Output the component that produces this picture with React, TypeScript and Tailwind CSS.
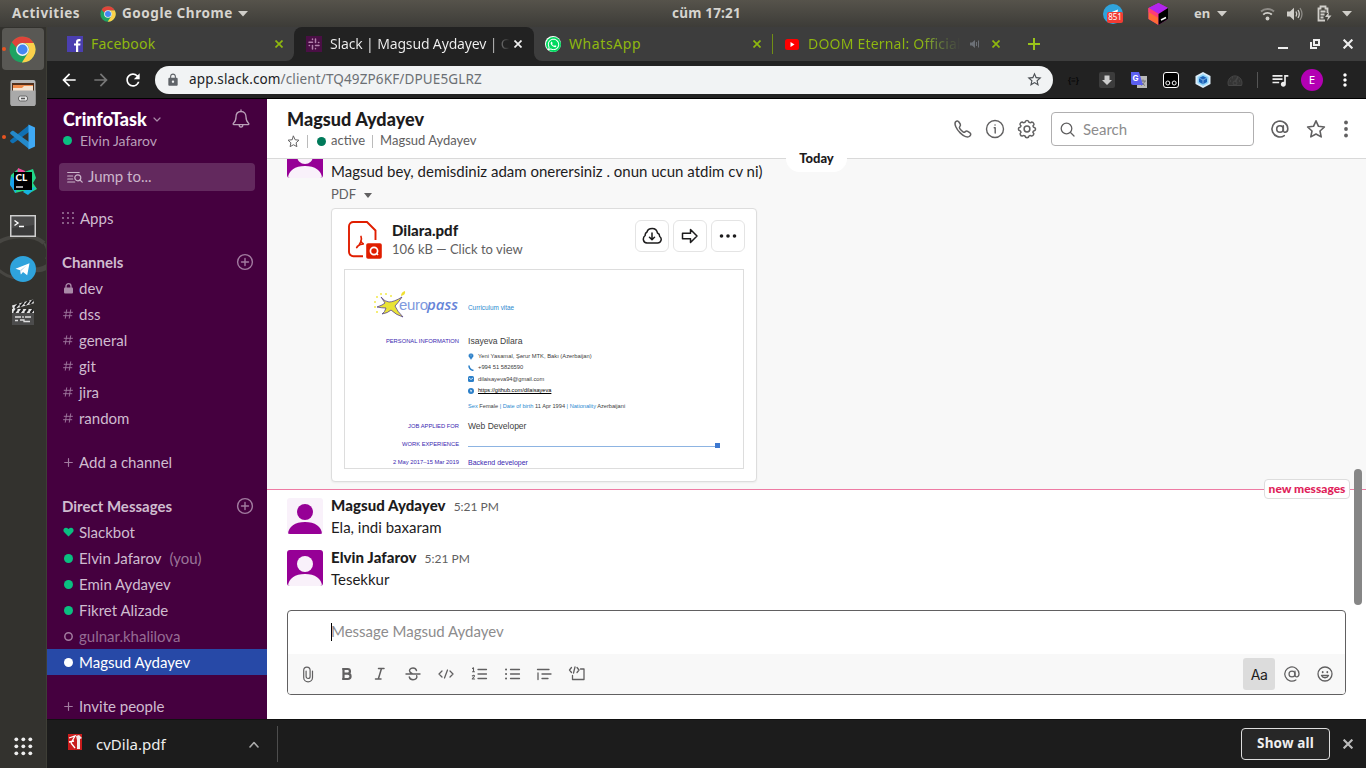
import React from "react";
import { MdArrowBack, MdArrowForward, MdRefresh, MdLock, MdStarBorder, MdQueueMusic, MdMoreVert } from "react-icons/md";
import { FaWhatsapp } from "react-icons/fa";

type SvgProps = { w: number; h?: number; box?: string; className?: string; sw?: number; children: React.ReactNode };

function Line({ w, h, box = "0 0 20 20", className = "", sw = 1.5, children }: SvgProps) {
  return (
    <svg width={w} height={h ?? w} viewBox={box} fill="none" stroke="currentColor" strokeWidth={sw} strokeLinecap="round" strokeLinejoin="round" className={`shrink-0 ${className}`}>
      {children}
    </svg>
  );
}

function ChromeLogo({ size }: { size: number }) {
  return (
    <svg width={size} height={size} viewBox="0 0 48 48" className="shrink-0">
      <circle cx="24" cy="24" r="23" fill="#1ea362" />
      <path d="M44 12.500A23 23 0 0 1 23 47l11-17.200A11.500 11.500 0 0 0 24 12.500z" fill="#fcd04b" />
      <path d="M24 1a23 23 0 0 1 20 11.500H24A11.500 11.500 0 0 0 13 20.500L5 11A23 23 0 0 1 24 1z" fill="#e0443a" />
      <circle cx="24" cy="24" r="11.500" fill="#f4f4f4" />
      <circle cx="24" cy="24" r="9" fill="#4587f3" />
    </svg>
  );
}

function TelegramLogo({ size }: { size: number }) {
  return (
    <svg width={size} height={size} viewBox="0 0 26 26" className="shrink-0">
      <circle cx="13" cy="13" r="13" fill="#2fa3dc" />
      <path d="M5.500 12.800L19.500 7.300l-2.300 11.900-4.200-3.100-2.100 2.300-.8-4.200z" fill="#fff" />
      <path d="M10.100 14.200l6.400-4.600-5.300 5.300-.3 3.500z" fill="#b9d6e8" />
    </svg>
  );
}

function DockItem({ children, active, dot }: { children: React.ReactNode; active?: boolean; dot?: boolean }) {
  return (
    <div className="relative flex h-11 w-full items-center justify-center pr-px">
      {dot && <span className="absolute left-[2px] top-5 size-1 rounded-full bg-[#e95420]" />}
      <div className={active ? "flex size-[42px] items-center justify-center rounded-[4px] bg-[#595854]" : "flex size-[42px] items-center justify-center"}>{children}</div>
    </div>
  );
}

function Dock() {
  return (
    <div className="relative flex w-[47px] shrink-0 flex-col border-r border-[#3e3e36] bg-[#33322e]">
      <svg width="46" height="60" viewBox="0 0 46 60" className="absolute left-0 top-[204px]" fill="none" stroke="#474642">
        <path d="M-4 13C8 3 34 3 44 12" strokeWidth="4" />
        <path d="M44 12c4 6 4 12 2 16" strokeWidth="2" />
        <path d="M-4 37c8 7 14 10 24 10" strokeWidth="3" />
        <path d="M34 38c6 2 10 0 14-3" strokeWidth="5" />
      </svg>
      <DockItem active dot><ChromeLogo size={27} /></DockItem>
      <DockItem>
        <svg width="26" height="28" viewBox="0 0 26 28">
          <rect x=".5" y="1" width="25" height="26" rx="2" fill="#b9b9b9" />
          <rect x="2" y="4" width="22" height="9" fill="#53301c" />
          <path d="M3 6h20v7H3z" fill="#ef8b4b" />
          <path d="M3 9h9l2-2h9v6H3z" fill="#f5e3d0" />
          <path d="M.5 11.500h25V25a2 2 0 0 1-2 2h-21a2 2 0 0 1-2-2z" fill="#a9a9a9" />
          <rect x="8.500" y="17" width="9" height="5" rx="2" fill="#e8e8e8" stroke="#666" />
          <path d="M11 19.500h4" stroke="#555" strokeWidth="1.500" />
        </svg>
      </DockItem>
      <DockItem dot>
        <svg width="26" height="26" viewBox="0 0 26 26">
          <path d="M19 1v7L3.700 18.900c-.6.500-1.200.4-1.900 0l-1-.8c-1-.8-1-1.600 0-2.400z" fill="#1070b3" />
          <path d="M19 25v-7L3.700 7.100c-.6-.5-1.200-.4-1.900 0l-1 .8c-1 .8-1 1.600 0 2.400z" fill="#2489ca" />
          <path d="M18.500.500L25 3.500v19l-6.500 3z" fill="#3fa9f5" />
        </svg>
      </DockItem>
      <DockItem>
        <svg width="28" height="28" viewBox="0 0 28 28">
          <path d="M2 8L9 2l6 3 9-3 3 9-3 5 4 6-9 5-5-3-8 2L1 17z" fill="#21d789" />
          <path d="M9 1l7 3 1 6-9-2z" fill="#f1499a" />
          <path d="M2 9l5 4v13L1 18z" fill="#1aa3ee" />
          <path d="M18 22l9-2-8 8-5-3z" fill="#17b3e0" />
          <rect x="5" y="5" width="18" height="18" fill="#000" />
          <text x="6.500" y="14.300" fontFamily="Lato, sans-serif" fontWeight="900" fontSize="10" fill="#fff">CL</text>
          <path d="M7 20h7" stroke="#ddd" strokeWidth="1.500" />
        </svg>
      </DockItem>
      <DockItem>
        <svg width="26" height="22" viewBox="0 0 26 22" className="mt-[2px]">
          <rect x=".7" y=".7" width="24.600" height="20.600" fill="#3a3a3a" stroke="#cfcfcf" strokeWidth="1.600" />
          <path d="M2 2h22v8L2 13z" fill="#4b4b4b" />
          <path d="M4.500 5.500L8 8l-3.500 2.500M9 11.500h5" fill="none" stroke="#fff" strokeWidth="1.400" />
        </svg>
      </DockItem>
      <DockItem><TelegramLogo size={26} /></DockItem>
      <DockItem>
        <svg width="24" height="26" viewBox="0 0 24 26" className="-mt-[2px]">
          <path d="M1 6.500L22 .500l1 3.700-21 6z" fill="#e6e6e6" />
          <path d="M4 9l4-4.500M9 7.700l4-4.500M14 6.200l4-4.500M19 5l3-4" stroke="#222" strokeWidth="2" />
          <rect x="1" y="10" width="22" height="4" fill="#e6e6e6" />
          <path d="M3 14l3-4M8.500 14l3-4M14 14l3-4M19.500 14l3-4" stroke="#222" strokeWidth="2.200" />
          <rect x="1" y="14" width="22" height="12" fill="#4c4c4c" />
          <path d="M4 18h6M12 17v2M14 18h6M4 21.500h3M9 21h4v1.500h6" stroke="#ddd" strokeWidth="1.300" fill="none" />
        </svg>
      </DockItem>
      <div className="mt-auto flex h-[44px] items-center justify-center">
        <svg width="19" height="19" viewBox="0 0 19 19" fill="#eee">
          {[2.300, 9.300, 16.300].map((y) => [2.300, 9.300, 16.300].map((x) => <circle key={`${x}-${y}`} cx={x} cy={y} r="1.900" />))}
        </svg>
      </div>
    </div>
  );
}

function Caret() {
  return <svg width="10" height="6" viewBox="0 0 10 6" className="shrink-0"><path d="M0 0h10L5 5.500z" fill="#d0cec9" /></svg>;
}

function TopBar() {
  return (
    <div className="relative flex h-[27px] shrink-0 items-center bg-linear-to-b from-[#56534b] to-[#3d3c38] font-['Noto_Sans',sans-serif] text-[13.500px] font-bold text-[#d6d4cf]">
      <span className="ml-3 w-[69px] whitespace-nowrap tracking-[0.55px]">Activities</span>
      <span className="ml-[19px] flex"><ChromeLogo size={16} /></span>
      <span className="ml-[6px] w-[110px] whitespace-nowrap tracking-[0.55px]">Google Chrome</span>
      <span className="ml-[6px]"><Caret /></span>
      <span className="absolute left-[672px] top-[3px] w-[72px] whitespace-nowrap tracking-[0.2px]">cüm 17:21</span>
      <div className="ml-auto flex items-center pr-[14px]">
        <div className="relative mr-[25px] size-5">
          <TelegramLogo size={20} />
          <span className="absolute left-[4px] top-[8px] flex h-[11.500px] w-4 items-center justify-center rounded-[2px] bg-[#f23c34] text-[8px] font-normal text-white">851</span>
        </div>
        <svg width="21" height="22" viewBox="0 0 21 22" className="mr-[25px]">
          <path d="M10.500 0l9.500 5v11l-9.500 6L.5 16V5z" fill="#d020b8" />
          <path d="M10.500 0l9.500 5-9.500 6L.5 5z" fill="#b125ee" />
          <path d="M.5 5l10 6v11l-10-6z" fill="#ff6a36" />
          <path d="M.5 5l10 6v4L.5 9z" fill="#ff3b78" />
          <path d="M10.500 11l9.500-6v11l-9.500 6z" fill="#000" />
          <path d="M13 17l5-2.500" stroke="#fff" strokeWidth="1.500" />
        </svg>
        <span className="w-[17px] text-[13px]">en</span>
        <span className="ml-[6px] mr-[33px]"><Caret /></span>
        <svg width="15" height="14" viewBox="0 0 15 14" fill="none" strokeWidth="1.900" className="mr-[12px]">
          <path d="M1 4.500a9.500 9.500 0 0 1 13 0" stroke="#8d8b86" />
          <path d="M3.200 7.600a6.300 6.300 0 0 1 8.600 0" stroke="#d0cec9" />
          <circle cx="7.500" cy="11.500" r="1.900" fill="#d0cec9" />
        </svg>
        <svg width="16" height="14" viewBox="0 0 16 14" fill="none" className="mr-[14px]">
          <path d="M0 4.500h3L7 .800v12.400L3 9.500H0z" fill="#d0cec9" />
          <path d="M9 4.500q1.500 2.500 0 5M11 3q2.600 4 0 8" stroke="#d0cec9" strokeWidth="1.300" />
          <path d="M13 1q4 6 0 12" stroke="#8d8b86" strokeWidth="1.300" />
        </svg>
        <svg width="15" height="17" viewBox="0 0 15 17" fill="none" stroke="#d0cec9" className="mr-[10px]">
          <path d="M8 15.500H1.500v-12h2v-2h5v2h2V8M3.500 6.500h5M3.500 9.500h4M3.500 12.500h3" strokeWidth="1.800" />
          <path d="M12 7l-4 5h3l-1 4 4.500-5.500h-3z" fill="#d0cec9" stroke="none" />
        </svg>
        <Caret />
      </div>
    </div>
  );
}

function Close({ color, s = 8 }: { color: string; s?: number }) {
  return <svg width={s} height={s} viewBox="0 0 8 8" className="shrink-0"><path d="M.5.500l7 7M7.500.500l-7 7" stroke={color} strokeWidth="1.700" /></svg>;
}

function Tabs() {
  return (
    <div className="flex h-[34px] shrink-0 items-center bg-[#3d3d3d] font-['Noto_Sans',sans-serif] text-[14px] text-[#8fb80f]">
      <div className="flex w-[247px] items-center pl-5">
        <svg width="16" height="16" viewBox="0 0 16 16"><rect width="16" height="16" fill="#4b3fb0" /><path d="M9 16V9.500H7v-2h2V6c0-2 1-3 3-3h1.500v2.200H12c-.6 0-.8.300-.8.900v1.400h2.300l-.3 2h-2V16z" fill="#fff" /></svg>
        <span className="-mt-[2px] ml-2 w-[184px] whitespace-nowrap tracking-[0.2px]">Facebook</span>
        <Close color="#8fb80f" />
      </div>
      <div className="relative flex h-full w-[240px] items-center rounded-t-[8px] bg-[#222] pl-3 text-[#f1f1f1]">
        <svg width="8" height="8" viewBox="0 0 8 8" className="absolute -left-2 bottom-0"><path d="M8 0v8H0a8 8 0 0 0 8-8z" fill="#222" /></svg>
        <svg width="8" height="8" viewBox="0 0 8 8" className="absolute -right-2 bottom-0"><path d="M0 0v8h8a8 8 0 0 1-8-8z" fill="#222" /></svg>
        <svg width="16" height="16" viewBox="0 0 16 16" className="shrink-0">
          <rect width="16" height="16" fill="#4a0f45" />
          <g stroke="#b484ae" strokeWidth="1.500" strokeLinecap="round">
            <path d="M3 6.300h3.500M6.500 3v.5M9.500 3v3.500M12.500 6.500h.3M9.500 9.500H13M9.500 12.500v.3M6.500 9.500V13M3.200 9.500h.3" />
          </g>
        </svg>
        <div className="-mt-[2px] ml-2 w-[180px] whitespace-nowrap bg-linear-to-r from-[#f1f1f1] from-88% to-[#222] to-100% bg-clip-text tracking-[-0.15px] text-transparent">Slack | Magsud Aydayev | C</div>
        <span className="ml-1 flex"><Close color="#f1f1f1" /></span>
      </div>
      <div className="flex h-5 w-[239px] items-center border-r border-[#718f15] pl-[11px]">
        <span className="flex size-4 items-center justify-center rounded-full bg-white"><span className="flex size-[15px] items-center justify-center rounded-full bg-[#00d95f] text-white"><FaWhatsapp size={13} /></span></span>
        <span className="-mt-[2px] ml-2 w-[184px] whitespace-nowrap tracking-[0.6px]">WhatsApp</span>
        <Close color="#8fb80f" />
      </div>
      <svg width="14" height="11" viewBox="0 0 14 11" className="ml-[12px]"><rect width="14" height="11" rx="2.500" fill="#f00" /><path d="M5.500 3v5l4-2.500z" fill="#fff" /></svg>
      <div className="-mt-[2px] ml-[9px] w-[153px] overflow-hidden whitespace-nowrap bg-linear-to-r from-[#8fb80f] from-75% to-[#3d3d3d] bg-clip-text tracking-[0.2px] text-transparent">DOOM Eternal: Official</div>
      <svg width="10" height="10" viewBox="0 0 10 10" className="ml-[9px]"><path d="M0 3.500h2L5 1v8L2 6.500H0z" fill="#6c7076" /><path d="M6.500 3v4M8.500 1.500v7" stroke="#6c7076" /></svg>
      <span className="ml-[12px] flex"><Close color="#8fb80f" /></span>
      <svg width="12" height="12" viewBox="0 0 12 12" className="ml-[28px]"><path d="M6 0v12M0 6h12" stroke="#9ac41a" strokeWidth="2" /></svg>
      <div className="ml-auto flex items-center pr-[13px]">
        <span className="mr-[22px] mt-2 h-[2px] w-[10px] bg-[#eee]" />
        <svg width="10" height="10" viewBox="0 0 10 10" className="mr-[23px]" fill="none" stroke="#eee" strokeWidth="2"><rect x="4" y="1" width="5" height="5" /><path d="M1 3v6h6" /></svg>
        <Close color="#eee" s={10} />
      </div>
    </div>
  );
}

function Toolbar() {
  return (
    <div className="flex h-[38px] shrink-0 items-center border-b border-black bg-[#222] font-['Noto_Sans',sans-serif] text-white">
      <MdArrowBack size={20} className="ml-3" />
      <MdArrowForward size={20} className="ml-3 text-[#777]" />
      <MdRefresh size={20} className="ml-3" />
      <div className="ml-[12px] flex h-7 w-[898px] items-center rounded-full bg-[#f1f3f4] pl-[11px] pr-[10px] text-[13.500px] text-[#6c7074]">
        <MdLock size={14} className="text-[#5f6368]" />
        <span className="-mt-px ml-[9px] whitespace-nowrap tracking-[0.13px]"><span className="text-[#202124]">app.slack.com</span>/client/TQ49ZP6KF/DPUE5GLRZ</span>
        <MdStarBorder size={17} className="ml-auto text-[#4d5156]" />
      </div>
      <span className="ml-[15px] w-4 text-[8px] font-bold text-[#090909]">{"{≡}"}</span>
      <svg width="16" height="16" viewBox="0 0 16 16" className="ml-[15px]"><rect width="16" height="16" rx="2" fill="#3c3c3c" /><path d="M5.500 3.500h5V8h2.500l-5 5-5-5h2.500z" fill="#ccc" /></svg>
      <svg width="16" height="16" viewBox="0 0 16 16" className="ml-4"><rect x="6" y="4" width="10" height="12" fill="#b9b9b9" /><path d="M9 9h6M12 7.500v2M14 9q-1 3-4 4.500M10.500 10.500q1.500 2 3.500 3" stroke="#777" fill="none" /><path d="M0 0h8l4 13H2a2 2 0 0 1-2-2z" fill="#5b5ff0" /><text x="1.500" y="9" fontFamily="Inter, sans-serif" fontWeight="700" fontSize="8" fill="#fff">G</text></svg>
      <svg width="16" height="16" viewBox="0 0 16 16" className="ml-4" fill="#000" stroke="#fff"><rect x=".5" y=".5" width="15" height="15" rx="2.500" /><circle cx="4.800" cy="11" r="2" /><circle cx="11.200" cy="11" r="2" /></svg>
      <svg width="16" height="16" viewBox="0 0 16 16" className="ml-4"><path d="M8 0l7.500 4v8L8 16 .5 12V4z" fill="#dcecf8" /><path d="M8 2l5.500 3v6L8 14l-5.500-3V5z" fill="#8ed6fb" /><path d="M8 4l4 2v4l-4 2.300L4 10V6z" fill="#1c62b8" /><path d="M4 6l4 2 4-2M8 8v4" stroke="#9cc9ef" strokeWidth=".7" fill="none" /></svg>
      <svg width="16" height="14" viewBox="0 0 16 14" className="ml-4" fill="none" stroke="#464646"><path d="M1.500 12.500a7 7 0 1 1 13 0z" fill="#353535" /><path d="M8 9l3-5M3 8h1M5 4.500l.7.700M12 8h1" strokeWidth="1.500" /><circle cx="8" cy="10" r="2" /></svg>
      <span className="ml-[14px] h-4 w-px bg-[#555]" />
      <MdQueueMusic size={20} className="ml-3 text-[#eee]" />
      <span className="ml-[11px] flex size-[22px] items-center justify-center rounded-full bg-[#b300b3] text-[11.500px]">E</span>
      <MdMoreVert size={20} className="ml-3" />
    </div>
  );
}

const plusCircle = (
  <Line w={18} sw={1.400} box="0 0 18 18" className="text-[#a27ba0]"><circle cx="9" cy="9" r="7.400" /><path d="M9 5.500v7M5.500 9h7" /></Line>
);

function SideRow({ icon, label, extra, selected, dim, wide }: { icon: React.ReactNode; label: string; extra?: string; selected?: boolean; dim?: boolean; wide?: boolean }) {
  const tone = selected ? "bg-[#2749a7] text-white" : dim ? "text-[#956c93]" : "text-[#cfbccf]";
  return (
    <div className={`flex h-[26px] shrink-0 items-center pl-[15px] text-[15px] ${tone}`}>
      <span className="flex w-3 justify-center text-[#a27ba0]">{icon}</span>
      <span className={wide ? "ml-[6px] whitespace-nowrap" : "ml-[5px] whitespace-nowrap"}>{label}</span>
      {extra && <span className="ml-2 text-[#9a7598]">{extra}</span>}
    </div>
  );
}

const dot = <span className="size-[9px] rounded-full bg-[#0abf81]" />;
const hash = <Line w={10} sw={0.900} box="0 0 10 10"><path d="M3.700.800L2.300 9.200M7.700.800L6.300 9.200M1.200 3.300h8.300M.500 6.700h8.300" /></Line>;
const plus = <Line w={9} sw={1.200} box="0 0 9 9"><path d="M4.500.700v7.600M.700 4.500h7.600" /></Line>;
const padlock = <svg width="9" height="11" viewBox="0 0 9 11" className="text-[#a98aa8]"><rect y="4.500" width="9" height="6" rx="1" fill="currentColor" /><path d="M2 5V3.200a2.500 2.500 0 0 1 5 0V5" fill="none" stroke="currentColor" strokeWidth="1.300" /></svg>;

function SectionHead({ label }: { label: string }) {
  return (
    <div className="mt-[18px] flex h-[26px] shrink-0 items-center justify-between pl-[15px] pr-[13px] text-[15px] font-bold text-[#cfbccf]">
      <span>{label}</span>
      {plusCircle}
    </div>
  );
}

function Sidebar() {
  return (
    <div className="flex w-[220px] shrink-0 flex-col overflow-hidden bg-[#45003f] text-[#cfbccf]">
      <div className="flex h-[64px] shrink-0 items-start justify-between pl-4 pr-[16px] pt-[9px]">
        <div>
          <div className="flex h-[22px] items-center text-[18px] font-black leading-[22px] text-white">
            CrinfoTask
            <Line w={8} h={5} box="0 0 8 5" sw={1.200} className="ml-[6px] text-[#a98aa8]"><path d="M1 1l3 3 3-3" /></Line>
          </div>
          <div className="flex h-[21px] items-center text-[14px] text-[#b99fb8]">
            {dot}
            <span className="-mt-px ml-2">Elvin Jafarov</span>
          </div>
        </div>
        <Line w={20} className="mt-px text-[#b99fb8]" sw={1.300}>
          <path d="M10 1v1.500M10 2.500c-3.500 0-5 2.700-5 5.500 0 4-1 5-2.700 6.500-.4.500-.1 1.200.5 1.200h14.400c.6 0 .9-.700.500-1.200C16 13 15 12 15 8c0-2.800-1.500-5.500-5-5.500zM8.200 16c0 2.700 3.600 2.700 3.600 0" />
        </Line>
      </div>
      <div className="mx-3 flex h-7 shrink-0 items-center rounded-[4px] bg-[#63295e] pl-2 text-[15px] text-[#cbb5ca]">
        <Line w={16} h={12} box="0 0 16 12" sw={1.200}><path d="M.7 1.500h11.500M.7 5h5M.7 8h5M.7 11h7" /><circle cx="10.800" cy="6.800" r="3" /><path d="M13 9l2.200 2.200" /></Line>
        <span className="-mt-px ml-[5px]">Jump to...</span>
      </div>
      <div className="mt-[14px]">
        <SideRow
          icon={<svg width="12" height="12" viewBox="0 0 12 12" fill="#a98aa8" className="shrink-0">{[1, 6, 11].map((y) => [1, 6, 11].map((x) => <circle key={`${x}-${y}`} cx={x} cy={y} r=".9" />))}</svg>}
          label="Apps"
          wide
        />
      </div>
      <SectionHead label="Channels" />
      <SideRow icon={padlock} label="dev" />
      {["dss", "general", "git", "jira", "random"].map((c) => <SideRow key={c} icon={hash} label={c} />)}
      <div className="mt-[18px]"><SideRow icon={plus} label="Add a channel" /></div>
      <SectionHead label="Direct Messages" />
      <SideRow icon={<svg width="11" height="10" viewBox="0 0 11 10"><path d="M5.500 9.500L1 5C-1 2 2.500-1 5.500 2 8.500-1 12 2 10 5z" fill="#0abf81" /></svg>} label="Slackbot" />
      <SideRow icon={dot} label="Elvin Jafarov" extra="(you)" />
      <SideRow icon={dot} label="Emin Aydayev" />
      <SideRow icon={dot} label="Fikret Alizade" />
      <SideRow icon={<svg width="9" height="9" viewBox="0 0 9 9"><circle cx="4.500" cy="4.500" r="3.700" fill="none" stroke="#a27ba0" strokeWidth="1.500" /></svg>} label="gulnar.khalilova" dim />
      <SideRow icon={<span className="size-[9px] rounded-full bg-white" />} label="Magsud Aydayev" selected />
      <div className="mt-[18px]"><SideRow icon={plus} label="Invite people" /></div>
    </div>
  );
}

const star = <path d="M10 1.800l2.500 5.500 5.900.7-4.400 4 1.200 5.900L10 15l-5.200 2.900L6 12 1.600 8l5.900-.7z" />;
const at = <><circle cx="10" cy="10" r="3.300" /><path d="M13.300 6.700v4.500c0 3 4.500 2.700 4.500-1.500a7.900 7.900 0 1 0-3.500 6.900" /></>;

function Header() {
  return (
    <div className="flex h-[60px] shrink-0 items-start border-b border-[#d9d9d9] bg-white pl-5">
      <div className="pt-[9px]">
        <div className="h-[23px] text-[18px] font-black leading-[23px] tracking-[0.05px] text-[#1d1c1d]">Magsud Aydayev</div>
        <div className="flex h-[20px] items-center text-[13px] text-[#616061]">
          <Line w={13} sw={1.500}>{star}</Line>
          <span className="ml-[7px] h-[13px] w-px bg-[#bbb]" />
          <span className="ml-[9px] size-[9px] rounded-full bg-[#007a5a]" />
          <span className="-mt-px ml-[5px]">active</span>
          <span className="mx-[7px] h-[13px] w-px bg-[#bbb]" />
          <span className="-mt-px">Magsud Aydayev</span>
        </div>
      </div>
      <div className="ml-auto flex items-center pr-[10px] pt-[13px] text-[#616061]">
        <Line w={20} sw={1.500}><path d="M2.600 2.800c1.300-1.300 2.500-1 3.300.2l1.300 2c.6 1 .3 1.800-.5 2.700-.6.700-.5 1.100.1 2 .8 1.200 2 2.300 3.200 3.100.9.600 1.400.7 2 .1.900-.8 1.700-1.100 2.700-.5l2 1.300c1.200.8 1.500 2 .2 3.300-2 2-6 .6-9.700-3.100C3.400 10.200.8 5 2.600 2.800z" /></Line>
        <Line w={20} sw={1.400} className="ml-3"><circle cx="10" cy="10" r="8.500" /><path d="M9.200 8.800h1V14M10 6h.1" /></Line>
        <Line w={20} sw={1.500} className="ml-3"><circle cx="10" cy="10" r="2.900" /><path d="M8 3.300q.3-1.900 2-1.900t2 1.900q1.800.8 2.600-.3 1.500 0 2.300 1.700.6 1-.9 2.200.1 1.100.8 1.400 1.800.400 1.800 1.800t-1.800 1.800q-.8.500-.9 1.400 1.500 1.200.7 2.400-.9 1.500-2.200 1.300-1.300-.8-2.400 0-.3 1.700-2 1.700t-2-1.700q-1.300-.8-2.500 0-1.500.200-2.200-1.400-.7-1.100.7-2.300-.2-1-.9-1.500-1.700-.300-1.700-1.800t1.700-1.800q.7-.4.900-1.300Q2.500 5.700 3.200 4.500 4 3 5.300 3.100 6.300 4.100 8 3.300z" /></Line>
        <div className="ml-[14px] flex h-[34px] w-[203px] items-center rounded-[4px] border border-[#b0afb0] pl-2 text-[15px] text-[#8d8c8d]">
          <Line w={15} box="0 0 15 15" sw={1.300} className="text-[#616061]"><circle cx="6.500" cy="6.500" r="5.300" /><path d="M10.500 10.500l3.500 3.500" /></Line>
          <span className="ml-2">Search</span>
        </div>
        <Line w={20} className="ml-4" sw={1.600}>{at}</Line>
        <Line w={20} className="ml-4" sw={1.600}>{star}</Line>
        <svg width="4" height="18" viewBox="0 0 4 18" className="ml-[18px] mr-2" fill="#616061"><circle cx="2" cy="2.500" r="1.900" /><circle cx="2" cy="9" r="1.900" /><circle cx="2" cy="15.500" r="1.900" /></svg>
      </div>
    </div>
  );
}

function Avatar({ bg, fg }: { bg: string; fg: string }) {
  return (
    <svg width="36" height="36" viewBox="0 0 36 36" className="shrink-0 rounded-[3px]">
      <rect width="36" height="36" fill={bg} />
      <circle cx="18" cy="14" r="8" fill={fg} />
      <path d="M1 36C1.500 28.500 8 24 18 24s16.500 4.500 17 12z" fill={fg} />
    </svg>
  );
}

function CvRow({ h, left, children }: { h: string; left?: React.ReactNode; children?: React.ReactNode }) {
  return (
    <div className={`flex shrink-0 items-center whitespace-nowrap leading-none ${h}`}>
      <div className="w-[114px] pt-px text-right text-[5.800px] text-[#3a27b0]">{left}</div>
      <div className="ml-[9px] flex items-center">{children}</div>
    </div>
  );
}

const blueText = "text-[#2b8ad0]";

function Preview() {
  return (
    <div className="ml-3 mt-[15px] flex h-[200px] w-[400px] flex-col overflow-hidden border border-[#ddd] bg-white font-['Liberation_Sans',sans-serif] text-[5.800px] text-[#404040]">
      <div className="flex h-[63px] shrink-0 items-start pl-[27px] pt-[20px]">
        <svg width="88" height="32" viewBox="0 0 88 32">
          <g fill="#f2e84a"><circle cx="9" cy="4" r="1" /><circle cx="5" cy="7" r="1" /><circle cx="3" cy="12" r="1" /><circle cx="3" cy="17" r="1" /><circle cx="5" cy="22" r="1" /><circle cx="14" cy="4" r="1" /><circle cx="19" cy="6" r="1" /></g>
          <path d="M9 7q4 5 8 5 5 0 13-5-4 6-7 9 2 5 8 11-7-2-12-7-3 3-9 4 3-2 4-6-4 0-9-1 6-2 8-4-2-3-4-6z" fill="#e9e337" stroke="#55458f" strokeWidth=".8" />
          <path d="M29 6q0-4 4-5 1 4-4 5z" fill="#f0df31" />
          <text x="27" y="20" fontFamily="Liberation Sans, sans-serif" fontSize="15" fill="#7f9ade" textLength="29">euro</text>
          <text x="55" y="20" fontFamily="Open Sans, sans-serif" fontSize="15" fontStyle="italic" fontWeight="600" fill="#6785d8" textLength="31">pass</text>
        </svg>
        <span className={`ml-2 mt-[15px] text-[6.400px] leading-none ${blueText}`}>Curriculum vitae</span>
      </div>
      <CvRow h="h-4" left="PERSONAL INFORMATION"><span className="text-[8.600px]">Isayeva Dilara</span></CvRow>
      <div className="h-[2px] shrink-0" />
      <CvRow h="h-[11.400px]">
        <svg width="6" height="7" viewBox="0 0 6 7" className="mr-[4px]"><path d="M3 7L.5 3.500a2.600 2.600 0 1 1 5 0zM3 1.500v2" fill="#2b7fc8" stroke="#fff" strokeWidth=".4" /></svg>
        <span>Yeni Yasamal, Şərur MTK, Bakı (Azerbaijan)</span>
      </CvRow>
      <CvRow h="h-[11.400px]">
        <svg width="6" height="6" viewBox="0 0 6 6" className="mr-[4px]"><path d="M1 .500q0 4 4.500 5" fill="none" stroke="#2b7fc8" strokeWidth="1.500" /></svg>
        <span>+994 51 5826590</span>
      </CvRow>
      <CvRow h="h-[11.400px]">
        <svg width="6" height="6" viewBox="0 0 6 6" className="mr-[4px]"><rect width="6" height="6" rx="1.500" fill="#2b7fc8" /><path d="M1 2l2 1.500L5 2" stroke="#fff" strokeWidth=".8" fill="none" /></svg>
        <span className="text-[5.700px]">dilaisayeva94@gmail.com</span>
      </CvRow>
      <CvRow h="h-[11.400px]">
        <svg width="6" height="6" viewBox="0 0 6 6" className="mr-[4px]"><circle cx="3" cy="3" r="3" fill="#2b7fc8" /><path d="M2 1.500l2 1-1 2z" fill="#fff" /></svg>
        <span className="text-[5.600px] text-black underline">https://github.com/dilaisayeva</span>
      </CvRow>
      <CvRow h="h-[21px]"><span className="text-[5.650px]"><span className={blueText}>Sex</span> Female <span className={blueText}>| Date of birth</span> 11 Apr 1994 <span className={blueText}>| Nationality</span> Azerbaijani</span></CvRow>
      <CvRow h="h-[17px]" left="JOB APPLIED FOR"><span className="text-[8.500px]">Web Developer</span></CvRow>
      <CvRow h="h-[20px]" left="WORK EXPERIENCE">
        <span className="mt-[4px] h-px w-[247px] bg-[#8db4e2]" /><span className="mt-[2px] size-[5px] bg-[#3d78d0]" />
      </CvRow>
      <CvRow h="h-[15px]" left="2 May 2017–15 Mar 2019"><span className="text-[7px] text-[#3a27b0]">Backend developer</span></CvRow>
    </div>
  );
}

const fileBtn = "flex h-8 w-[34px] items-center justify-center rounded-[6px] border border-[#e4e4e4] bg-white";

function FileCard() {
  return (
    <div className="mt-[3px] h-[274px] w-[426px] rounded-[4px] border border-[#ddd] bg-white shadow-[0_1px_2px_rgba(0,0,0,0.05)]">
      <div className="flex h-[45px] items-start pl-4 pr-[11px] pt-[11px]">
        <svg width="36" height="40" viewBox="0 0 36 40" fill="none" className="mt-px shrink-0">
          <path d="M15 35.200H5.500A4.300 4.300 0 0 1 1 31V5.200A4.300 4.300 0 0 1 5.500 1H19l8.500 8.500V19" stroke="#e01e00" strokeWidth="1.900" />
          <path d="M13 15.500c.8 1.700.5 3.500-.3 5.500-.9 2.300-2.200 4-4 5.500M12.800 20c.8 1.700 1.500 2.600 3 3-2.600 0-4.600.8-6.500 2.300" stroke="#e01e00" strokeWidth="1.700" strokeLinecap="round" />
          <rect x="17.500" y="21.500" width="17" height="17" rx="2.500" fill="#e01e00" stroke="#fff" strokeWidth="1.400" />
          <circle cx="26" cy="30" r="3.600" stroke="#fff" strokeWidth="1.700" /><path d="M28.300 32l1.700 2" stroke="#fff" strokeWidth="1.500" />
        </svg>
        <div className="ml-2">
          <div className="h-5 text-[15px] font-black leading-5 text-[#1d1c1d]">Dilara.pdf</div>
          <div className="h-[18px] text-[13px] leading-[18px] text-[#616061]">106 kB — Click to view</div>
        </div>
        <div className="ml-auto flex gap-1 text-[#1d1c1d]">
          <span className={fileBtn}><Line w={20} h={18} box="0 0 20 18" sw={1.500}><path d="M5 16h10.500a3.600 3.600 0 0 0 2.200-6.500c0-2-1-3-2.200-3.500-.5-2.700-2.500-4.500-5.300-4.500-2.500 0-4.700 1.300-5.200 3.500-1.500.8-2 2-1.800 3.500C.500 10.500.500 15.500 5 16zM10 6v6.500M7.500 10.200l2.500 2.500 2.500-2.500" /></Line></span>
          <span className={fileBtn}><Line w={18} box="0 0 18 18" sw={1.500}><path d="M1.500 6.300h8V2.500L16 9l-6.500 6.500v-3.800h-8z" /></Line></span>
          <span className={fileBtn}><svg width="18" height="4" viewBox="0 0 18 4" fill="#1d1c1d"><circle cx="2.500" cy="2" r="1.800" /><circle cx="9" cy="2" r="1.800" /><circle cx="15.500" cy="2" r="1.800" /></svg></span>
        </div>
      </div>
      <Preview />
    </div>
  );
}

function Message({ name, text, avatar }: { name: string; text: string; avatar: React.ReactNode }) {
  return (
    <div className="mt-2 flex h-[44px] pl-5">
      {avatar}
      <div className="-mt-1 ml-2">
        <div className="flex h-[22px] items-baseline text-[15px] font-black leading-[22px] tracking-[0.07px] text-[#1d1c1d]">{name}<span className="ml-2 text-[12px] font-normal tracking-normal text-[#616061]">5:21 PM</span></div>
        <div className="h-[22px] text-[15px] leading-[22px] text-[#1d1c1d]">{text}</div>
      </div>
    </div>
  );
}

function Composer() {
  return (
    <div className="mx-5 mb-6 mt-auto flex h-[85px] w-[1059px] shrink-0 flex-col overflow-hidden rounded-[4px] border border-[#616061] bg-white">
      <div className="flex h-[43px] items-center pb-[2px] pl-[43px] text-[15px] text-[#8d8c8d]"><span className="-mr-px h-[18px] w-px bg-black" />Message Magsud Aydayev</div>
      <div className="flex flex-1 items-center bg-[#f8f8f8] pl-[11px] text-[#616061]">
        <Line w={18} box="0 0 18 18" sw={1.200}><path d="M13.500 6v6.500a4.300 4.300 0 0 1-8.800 0V5.300a3.200 3.200 0 0 1 6.400 0V11.500a2 2 0 0 1-4 0V6" /></Line>
        <Line w={18} box="0 0 18 18" sw={2.200} className="ml-[21px]"><path d="M5.500 4v10M5 4h4.700c3 0 3 4.700 0 4.700H5.500M9.700 8.700c3.800 0 3.800 5.300 0 5.300H5" /></Line>
        <Line w={18} box="0 0 18 18" sw={1.500} className="ml-[15px]"><path d="M7.500 3.500h5.500M4.500 14h5.500M10.500 3.500L7.300 14" /></Line>
        <Line w={18} box="0 0 18 18" sw={1.400} className="ml-[15px]"><path d="M2 9h14M12.500 5.500C12 3.700 10.700 3 9 3 6 3 4.700 5.300 6 7c.7 1 2 1.300 3 2M5.300 12c.4 1.900 2 2.700 3.700 2.700 3 0 4.500-2 3.700-4" /></Line>
        <Line w={18} box="0 0 18 18" sw={1.300} className="ml-[15px]"><path d="M5 6L2 9l3 3M13 6l3 3-3 3M10.500 5l-3 8" /></Line>
        <Line w={18} box="0 0 18 18" sw={1.300} className="ml-[15px]"><path d="M8 4.500h8.500M8 9h8.500M8 13.500h8.500" /><path d="M2.500 3.500l1-.7v4M2.500 6.800h2M2.300 11q1.800-1.500 2.200 0c0 1-1.700 1.700-2.200 3h2.300" strokeWidth="1.100" /></Line>
        <Line w={18} box="0 0 18 18" sw={1.300} className="ml-[15px]"><path d="M7.500 4.500h9M7.500 9h9M7.500 13.500h9" /><path d="M3 4.500h.1M3 9h.1M3 13.500h.1" strokeWidth="2" /></Line>
        <Line w={18} box="0 0 18 18" sw={1.300} className="ml-[14px]"><path d="M2.500 4.500H14M7 9h9M7 13.500h6M3 8v6.500" /></Line>
        <Line w={18} box="0 0 18 18" sw={1.300} className="ml-[15px]"><path d="M3.500 2.500L1.500 5l2 2.500M9 2.500L11 5 9 7.500M7 2L5.500 8M12.500 4H16v10.500H4.500V10.500" /></Line>
        <div className="ml-auto flex size-8 items-center justify-center rounded-[3px] bg-[#dcdcdc] font-['Inter',sans-serif] text-[14px] tracking-[-0.5px] text-[#1d1c1d]">Aa</div>
        <Line w={18} className="ml-[8px]" sw={1.400}>{at}</Line>
        <Line w={18} box="0 0 18 18" sw={1.300} className="ml-[15px] mr-[11px]"><circle cx="9" cy="9" r="7" /><path d="M5.500 10.500c1.300 3 5.700 3 7 0z" /><path d="M6.700 7v.3M11.300 7v.3" strokeWidth="1.800" /></Line>
      </div>
    </div>
  );
}

function Conversation() {
  return (
    <div className="relative flex min-h-0 flex-1 flex-col bg-white">
      <Header />
      <div className="h-[331px] shrink-0 border-b border-[#ee7ba4] bg-[#f8f8f8] pl-5">
        <div className="flex">
          <div className="h-5 w-9 overflow-hidden"><div className="-mt-[17px]"><Avatar bg="#960096" fg="#f9f1fa" /></div></div>
          <div className="ml-2 pt-px">
            <div className="h-[23px] whitespace-nowrap text-[15px] leading-[22px] text-[#1d1c1d]">Magsud bey, demisdiniz adam onerersiniz . onun ucun atdim cv ni)</div>
            <div className="flex h-[22px] items-center pt-px text-[13px] text-[#616061]">PDF<svg width="8" height="5" viewBox="0 0 8 5" className="ml-2 mt-[2px]"><path d="M0 0h8L4 5z" fill="#616061" /></svg></div>
            <FileCard />
          </div>
        </div>
      </div>
      <span className="absolute left-[519px] top-[46px] flex h-[27px] w-[61px] items-center justify-center rounded-full bg-white text-[13px] font-black text-[#1d1c1d]">Today</span>
      <span className="absolute right-4 top-[380px] flex h-[20px] w-[86px] items-center justify-center rounded-[4px] border border-[#ddd] bg-white text-[12px] font-black leading-none text-[#e01e5a]">new messages</span>
      <span className="absolute right-1 top-[370px] h-[136px] w-2 rounded-full bg-[#868686]" />
      <Message name="Magsud Aydayev" text="Ela, indi baxaram" avatar={<Avatar bg="#f9f1fa" fg="#960096" />} />
      <Message name="Elvin Jafarov" text="Tesekkur" avatar={<Avatar bg="#960096" fg="#f9f1fa" />} />
      <Composer />
    </div>
  );
}

function DownloadBar() {
  return (
    <div className="flex h-[49px] shrink-0 items-center border-t border-[#111] bg-[#1c1c1c] font-['Noto_Sans',sans-serif] text-[#eee]">
      <svg width="15" height="17" viewBox="0 0 15 17" className="-mt-[3px] ml-[21px]"><rect width="14" height="16" fill="#c91c1c" /><path d="M1 4l6-2-4 7M3 9l4 5M1 8l5-1" stroke="#fff" strokeWidth="1.300" fill="none" /><path d="M8 2l3-1 3 3-2 1v10H9V6z" fill="#f4e9e9" /></svg>
      <span className="ml-[13px] w-[71px] whitespace-nowrap text-[15px]">cvDila.pdf</span>
      <Line w={10} h={7} box="0 0 10 7" sw={1.600} className="ml-[82px] text-[#aaa]"><path d="M1 6l4-4.500L9 6" /></Line>
      <span className="ml-[18px] h-9 w-px bg-[#4d4d4d]" />
      <span className="ml-auto flex h-8 w-[89px] items-center justify-center rounded-[4px] border border-[#ddd] bg-[#272727] pb-[2px] text-[13.500px] font-bold tracking-[0.15px]">Show all</span>
      <span className="ml-[13px] mr-[13px] flex"><Close color="#bbb" s={10} /></span>
    </div>
  );
}

export default function App() {
  return (
    <div className="flex h-[768px] w-[1366px] flex-col overflow-hidden bg-[#33322e] font-['Lato',sans-serif]">
      <TopBar />
      <div className="flex min-h-0 flex-1">
        <Dock />
        <div className="flex w-[1319px] flex-col">
          <Tabs />
          <Toolbar />
          <div className="flex min-h-0 flex-1">
            <Sidebar />
            <Conversation />
          </div>
          <DownloadBar />
        </div>
      </div>
    </div>
  );
}
